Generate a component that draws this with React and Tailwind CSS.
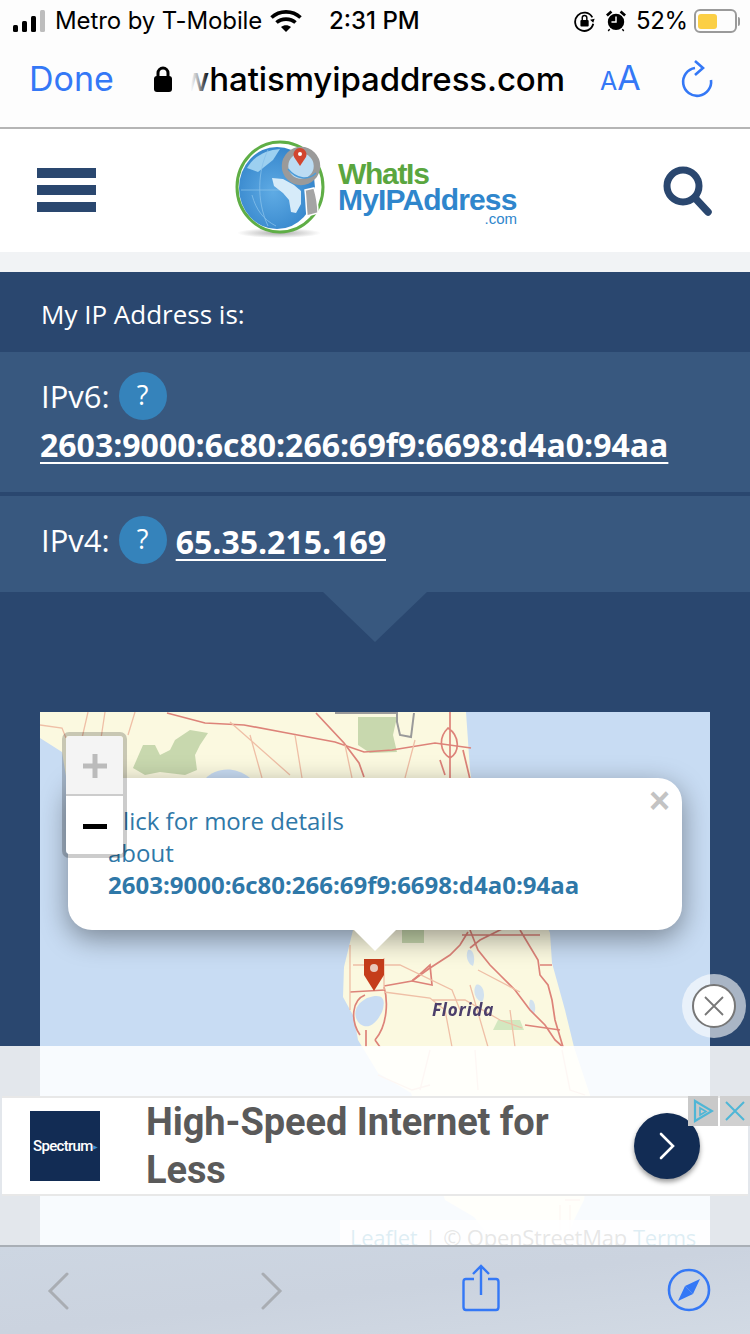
import React from "react";

const sf = "font-['Inter','Liberation_Sans',sans-serif]";
const os = "font-['Open_Sans','Noto_Sans',sans-serif]";

function StatusBar() {
  return (
    <div className={`flex h-[42px] items-center text-[24px] text-black ${sf}`}>
      <svg width="32" height="22" viewBox="0 0 32 22" className="ml-[13px]">
        <rect x="0" y="15" width="5" height="7" rx="1.5" fill="#000" />
        <rect x="9" y="11" width="5" height="11" rx="1.5" fill="#000" />
        <rect x="18" y="6" width="5" height="16" rx="1.5" fill="#000" />
        <rect x="27" y="0" width="5" height="22" rx="1.5" fill="#bdbdbd" />
      </svg>
      <span className="ml-[10px] w-[215px] whitespace-nowrap tracking-[-0.1px]">Metro by T-Mobile</span>
      <svg width="32" height="24" viewBox="0 0 32 24">
        <path d="M1.5 8.5C9.5 1 22.5 1 30.5 8.5" stroke="#000" strokeWidth="3.6" fill="none" />
        <path d="M6.5 13.5C11.5 9 20.5 9 25.5 13.5" stroke="#000" strokeWidth="3.6" fill="none" />
        <path d="M11 18C14 15.5 18 15.5 21 18L16 23Z" fill="#000" />
      </svg>
      <span className="ml-[27px] w-[100px] whitespace-nowrap font-medium">2:31 PM</span>
      <svg width="22" height="22" viewBox="0 0 24 24" className="ml-[145px]">
        <path d="M20 8A10 10 0 1 0 21 15" stroke="#000" strokeWidth="2" fill="none" />
        <path d="M22.5 9.5L17.5 10.5L21 14Z" fill="#000" />
        <rect x="7" y="11" width="9" height="7" rx="1" fill="#000" />
        <path d="M9 11V8.5a2.5 2.5 0 0 1 5 0V11" stroke="#000" strokeWidth="1.6" fill="none" />
      </svg>
      <svg width="20" height="22" viewBox="0 0 22 24" className="ml-[10px]">
        <circle cx="11" cy="13" r="9" fill="#000" />
        <path d="M11 7V13H6" stroke="#fff" strokeWidth="1.6" fill="none" />
        <path d="M1 6L6 1.5M21 6L16 1.5" stroke="#000" strokeWidth="3" />
        <path d="M4 21L2.5 23M18 21L19.5 23" stroke="#000" strokeWidth="1.6" />
      </svg>
      <span className="ml-[10px] whitespace-nowrap tracking-[-0.4px]">52%</span>
      <div className="ml-[6px] flex items-center">
        <div className="flex h-[24px] w-[43px] items-center rounded-[6px] border-2 border-[#9a9a9a] p-[2px]">
          <div className="h-[15px] w-[19px] rounded-[3px] bg-[#fbcf45]" />
        </div>
        <div className="ml-[1px] h-[9px] w-[2px] rounded-r bg-[#9a9a9a]" />
      </div>
    </div>
  );
}

function UrlBar() {
  return (
    <div className={`flex h-[87px] items-start border-b-2 border-[#b5b5b5] pt-[15px] ${sf}`}>
      <span className="ml-[29px] w-[110px] text-[34px] leading-[44px] text-[#3478f6]">Done</span>
      <svg width="18" height="26" viewBox="0 0 18 26" className="ml-[15px] mt-[9px]">
        <rect x="0" y="10" width="18" height="16" rx="3" fill="#000" />
        <path d="M4 11V7a5 5 0 0 1 10 0v4" stroke="#000" strokeWidth="3" fill="none" />
      </svg>
      <div className="relative ml-[9px] h-[44px] w-[392px]">
        <span className="absolute left-[1px] top-0 whitespace-nowrap text-[33px] font-medium leading-[44px] tracking-[-0.1px] text-black">whatismyipaddress.com</span>
        <div className="absolute left-0 top-0 h-[44px] w-[28px] bg-gradient-to-r from-[#fdfdfd] from-35% via-[#fdfdfd]/70 via-60% to-transparent" />
      </div>
      <div className="ml-[27px] mt-[3px] flex w-[38px] items-baseline text-[#3478f6]">
        <span className="text-[25px] leading-[36px]">A</span>
        <span className="text-[34px] leading-[36px]">A</span>
      </div>
      <svg width="34" height="40" viewBox="0 0 34 40" className="ml-[42px] mt-[1px]">
        <path d="M15 10A14 14 0 1 0 31 22" stroke="#3478f6" strokeWidth="2.6" fill="none" />
        <path d="M15 3L23 10L15 17" stroke="#3478f6" strokeWidth="2.6" fill="none" />
      </svg>
    </div>
  );
}

function Logo() {
  return (
    <div className="flex h-[123px] items-start">
      <svg width="94" height="100" viewBox="233 140 94 100" className="mt-[11px]">
        <defs>
          <radialGradient id="g" cx="0.45" cy="0.55" r="0.65">
            <stop offset="0" stopColor="#5fabe4" />
            <stop offset="1" stopColor="#2f80c8" />
          </radialGradient>
          <radialGradient id="s" cx="0.5" cy="0.5" r="0.5">
            <stop offset="0" stopColor="#8a8a8a" stopOpacity="0.7" />
            <stop offset="1" stopColor="#8a8a8a" stopOpacity="0" />
          </radialGradient>
        </defs>
        <ellipse cx="279" cy="233" rx="42" ry="5" fill="url(#s)" />
        <ellipse cx="280" cy="187" rx="43" ry="45" fill="#fff" stroke="#5fae46" strokeWidth="3" />
        <ellipse cx="277" cy="188" rx="38" ry="41" fill="url(#g)" />
        <path d="M247 168C254 156 266 150 280 149L273 160L258 172Z" fill="#9cd0f0" />
        <path d="M252 195C256 210 264 220 276 226M241 190H300M268 150C258 170 256 200 268 226" stroke="#86c0ea" strokeWidth="0.8" fill="none" />
        <path d="M272 178L283 179L294 185L301 191L301 204L296 213L291 212L289 200L283 193L274 186Z" fill="#d6ebf9" />
        <circle cx="301" cy="166" r="16" fill="#bcdcf3" stroke="#9a9a9a" strokeWidth="6.5" />
        <path d="M288 169C296 179 308 181 316 173" stroke="#4b9bd8" strokeWidth="1.4" fill="none" />
        <path d="M300 166L294 157A6.5 6.5 0 1 1 306 157Z" fill="#d2452f" />
        <circle cx="300" cy="154" r="2" fill="#fff" />
        <path d="M305 190L314 188C317 198 318 206 318 213L307 216C306 206 306 198 305 190Z" fill="#a4a4a4" stroke="#fff" strokeWidth="1.5" />
      </svg>
      <div className="ml-[11px] mt-[31px] flex w-[180px] flex-col font-['Liberation_Sans',sans-serif] font-bold">
        <span className="h-[27px] text-[30px] leading-[27px] tracking-[-1.3px] text-[#5aa63f]">WhatIs</span>
        <span className="h-[26px] whitespace-nowrap text-[30px] leading-[26px] tracking-[-0.85px] text-[#2f86cc]">MyIPAddress</span>
        <span className="self-end pr-[1px] text-[15px] font-normal leading-[12px] text-[#2f86cc]">.com</span>
      </div>
    </div>
  );
}

function SiteHeader() {
  return (
    <div className="flex h-[123px] bg-white">
      <div className="ml-[37px] mt-[39px] flex h-[44px] w-[59px] flex-col gap-[7px]">
        <div className="h-[10px] bg-[#2a476f]" />
        <div className="h-[10px] bg-[#2a476f]" />
        <div className="h-[10px] bg-[#2a476f]" />
      </div>
      <div className="ml-[137px]"><Logo /></div>
      <svg width="50" height="52" viewBox="0 0 50 52" className="ml-[145px] mt-[37px]">
        <circle cx="20" cy="20" r="16" stroke="#2a476f" strokeWidth="7" fill="none" />
        <path d="M32 32L45 46" stroke="#2a476f" strokeWidth="7.5" strokeLinecap="round" />
      </svg>
    </div>
  );
}

function Q() {
  return (
    <span className="mx-[9px] flex h-[48px] w-[48px] shrink-0 items-center justify-center rounded-full bg-[#3583bb] pb-[4px] text-[27px] leading-none text-white">?</span>
  );
}

function IpPanel() {
  return (
    <div className={`text-white ${os}`}>
      <div className="flex h-[80px] items-center pl-[41px] pt-[5px] text-[26px]">My IP Address is:</div>
      <div className="h-[140px] bg-[#38587f] pl-[40px] pt-[20px]">
        <div className="flex h-[48px] items-center pl-[1px] text-[31px]">IPv6:<Q /></div>
        <a className="mt-[3px] block whitespace-nowrap text-[32px] font-bold leading-[44px] underline decoration-[2px] underline-offset-[5px]">2603:9000:6c80:266:69f9:6698:d4a0:94aa</a>
      </div>
      <div className="mt-[4px] flex h-[96px] items-center bg-[#38587f] pb-[8px] pl-[41px]">
        <span className="text-[31px]">IPv4:</span><Q />
        <a className="mt-[3px] text-[32px] font-bold underline decoration-[2px] underline-offset-[5px]">65.35.215.169</a>
      </div>
      <div className="mx-auto h-0 w-0 border-x-[52px] border-t-[50px] border-x-transparent border-t-[#38587f]" />
    </div>
  );
}

const road = "#dd8379";
const thin = "#efbfa6";

function MapArt() {
  return (
    <svg width="670" height="622" viewBox="40 712 670 622" className="block blur-[0.4px]">
      <rect x="40" y="712" width="670" height="622" fill="#c8dcf3" />
      <path d="M40 712H466L470 770L476 810L484 860L535 900L550 933L552 963L565 1010L574 1047L590 1095L592 1150L584 1200L574 1220L556 1262L540 1275L505 1255L474 1217L445 1200L411 1093L378 1073L358 1040L354 1017L343 997L344 967L353 930L300 800L70 800L62 752L40 738Z" fill="#fbf9e0" />
      <path d="M133 768L143 745L155 745L160 755L170 750L175 740L190 730L208 733L200 745L195 755L197 770L185 775L160 772L145 775Z" fill="#c8d8ae" />
      <path d="M358 717H397L393 735L397 752L370 753L358 745Z" fill="#c8d8ae" />
      <path d="M206 778C214 770 232 764 250 778V790H206Z" fill="#c8dcf3" />
      <path d="M335 713H397L397 722L400 735L411 737L414 713" stroke="#9a9a9a" strokeWidth="2" fill="none" />
      <path d="M493 1030L498 1020H520L524 1030Z" fill="#d3e8c0" />
      <path d="M402 930H424V943H402Z" fill="#c8d8ae" />
      <path d="M367 998C384 992 386 1000 382 1012C376 1024 368 1030 360 1024C352 1016 354 1005 367 998Z" fill="#c8dcf3" />
      <path d="M468 950C473 948 476 958 473 966C468 964 465 956 468 950ZM476 985C482 982 487 995 482 1002C476 1000 472 992 476 985ZM530 1000C534 998 537 1008 534 1014C530 1012 528 1006 530 1000Z" fill="#c8dcf3" opacity="0.8" />
      <g stroke={road} strokeWidth="1.7" fill="none">
        <path d="M167 713L205 723L244 725L287 733L335 742L364 752L392 750L435 743L471 748" />
        <path d="M316 713L344 743L359 763L364 777" />
        <path d="M448 728C438 738 440 752 450 758C460 752 460 736 448 728ZM450 712V780" />
        <path d="M463 750L475 800M440 760L445 775" />
        <path d="M384 986L412 981L430 968L450 955L460 945L468 932" />
        <path d="M412 981L418 976L430 965L432 985L412 981" />
        <path d="M470 930L478 950L490 965L500 975L515 990L530 1010L545 1025L555 1040L563 1047" />
        <path d="M462 935H540M470 948L480 940L510 925M520 930L538 960L540 975L548 985L552 1000L555 1020L563 1047" />
        <path d="M525 1025L560 1030M540 965H552" />
        <path d="M360 1035C350 1020 352 1000 365 995M375 1040C388 1025 388 1000 384 987" />
        <path d="M366 1030V1047M375 1040L380 1047M350 992L385 990" />
      </g>
      <g stroke={thin} strokeWidth="1.3" fill="none">
        <path d="M40 725L62 728L66 738M88 712L82 738M105 712L100 745M135 712L128 735" />
        <path d="M230 722L290 775M250 735L262 778M295 735L302 778M345 745L352 778M415 740L405 778" />
        <path d="M384 992L430 998L445 1010L452 1047M432 1000L465 1000L500 1020L522 1028M478 970L520 992" />
        <path d="M353 965H400L452 990L460 1010M350 945V1010M384 958V990M470 985L488 1047M510 1010L515 1047" />
        <path d="M378 1075L412 1090L430 1085M430 1050L420 1090M475 1050L478 1090" />
        <path d="M562 1050L570 1090L585 1095M565 1200H580M570 1205V1240M560 1205V1240" />
      </g>
      <text x="432" y="1016" fill="#4b3f6b" fontSize="17" fontStyle="italic" fontWeight="700" letterSpacing="0.8" fontFamily="'Noto Sans',sans-serif">Florida</text>
      <path d="M364 959H384V975L374 991L364 975Z" fill="#c53d1b" />
      <circle cx="374" cy="968" r="4" fill="#e9c8bd" />
    </svg>
  );
}

function MapBlock() {
  return (
    <div className={`relative mx-[40px] mt-[70px] h-[622px] w-[670px] overflow-hidden ${os}`}>
      <MapArt />
      <div className="absolute right-0 top-[508px] flex h-[34px] w-[370px] items-center whitespace-nowrap bg-white/80 pl-[10px] text-[22px] tracking-[-0.25px] text-[#444]">
        <span className="text-[#0078a8]">Leaflet</span><span className="mx-[7px]">|</span><span>© OpenStreetMap</span><span className="ml-[6px] text-[#0078a8]">Terms</span>
      </div>
      <div className="absolute left-[28px] top-[66px] h-[152px] w-[614px] rounded-[24px] bg-white pl-[40px] pt-[27px] text-[24px] leading-[32px] text-[#2f78a8] shadow-[0_8px_28px_rgba(0,0,0,0.4)]">
        <div className="w-[300px]">Click for more details</div>
        <div>about</div>
        <div className="font-bold">2603:9000:6c80:266:69f9:6698:d4a0:94aa</div>
        <span className="absolute right-[12px] top-[2px] font-['Liberation_Sans',sans-serif] text-[36px] font-bold leading-[42px] text-[#c3c3c3]">×</span>
      </div>
      <div className="absolute left-[314px] top-[218px] h-0 w-0 border-x-[21px] border-t-[21px] border-x-transparent border-t-white" />
      <div className="absolute left-[22px] top-[20px] h-[126px] w-[65px] rounded-[7px] border-[4px] border-[#000]/20 bg-clip-padding">
        <div className="flex h-[60px] items-center justify-center rounded-t-[4px] border-b-2 border-[#ccc] bg-[#f4f4f4] pt-[1px]">
          <svg width="24" height="24" viewBox="0 0 24 24"><path d="M0 12H24M12 0V24" stroke="#bbb" strokeWidth="5" /></svg>
        </div>
        <div className="flex h-[58px] items-center justify-center rounded-b-[4px] bg-white pt-[3px]">
          <svg width="24" height="6" viewBox="0 0 24 6"><rect width="24" height="5" fill="#000" /></svg>
        </div>
      </div>
    </div>
  );
}

function AdOverlay() {
  return (
    <div className="absolute left-0 top-[1046px] h-[199px] w-[750px] bg-white/[0.87]">
      <div className="absolute right-[4px] top-[-72px] flex h-[64px] w-[64px] items-center justify-center rounded-full bg-[#fff]/60">
        <div className="flex h-[44px] w-[44px] items-center justify-center rounded-full border-2 border-[#777] bg-white">
          <svg width="22" height="22" viewBox="0 0 22 22"><path d="M2 2L20 20M20 2L2 20" stroke="#777" strokeWidth="1.8" /></svg>
        </div>
      </div>
      <div className="relative mx-[2px] mt-[50px] flex h-[100px] items-center border-y-2 border-[#e8e8e8] bg-white">
        <div className="ml-[28px] flex h-[70px] w-[70px] shrink-0 items-center justify-center bg-[#122c54] font-['Roboto',sans-serif] text-[15px] font-medium tracking-[-0.7px] text-white">Spectrum<span className="text-[6px] text-[#3f8fd8]">▶</span></div>
        <div className="ml-[46px] w-[440px] shrink-0 font-['Roboto',sans-serif] text-[38px] font-bold leading-[48px] tracking-[-0.08px] text-[#5a5a5a]">High-Speed Internet for Less</div>
        <div className="ml-[48px] flex h-[66px] w-[66px] shrink-0 items-center justify-center rounded-full bg-[#122c54] shadow-[0_3px_5px_rgba(0,0,0,0.4)]">
          <svg width="18" height="30" viewBox="0 0 18 30"><path d="M3 3L15 15L3 27" stroke="#fff" strokeWidth="2.6" fill="none" strokeLinecap="round" /></svg>
        </div>
      </div>
      <div className="absolute right-0 top-[50px] flex gap-[2px]">
        <div className="flex h-[30px] w-[30px] items-center justify-center bg-[#c9c9c9]">
          <svg width="22" height="24" viewBox="0 0 22 24"><path d="M3 2L20 12L3 22Z" stroke="#4fb6d6" strokeWidth="2.2" fill="none" /><path d="M8 9L14 12.5L8 16Z" stroke="#4fb6d6" strokeWidth="1.6" fill="none" /></svg>
        </div>
        <div className="flex h-[30px] w-[30px] items-center justify-center bg-[#d0d0d0]">
          <svg width="20" height="20" viewBox="0 0 20 20"><path d="M1 1L19 19M19 1L1 19" stroke="#4fb6d6" strokeWidth="2" /></svg>
        </div>
      </div>
    </div>
  );
}

function Toolbar() {
  return (
    <div className="absolute bottom-0 left-0 flex h-[89px] w-[750px] items-start border-t-2 border-[#a9afb6] bg-gradient-to-br from-[#cdd6e2] via-[#cbd3df] to-[#d2dae4]">
      <svg width="22" height="38" viewBox="0 0 22 38" className="ml-[47px] mt-[25px]"><path d="M20 2L3 19L20 36" stroke="#a9adb3" strokeWidth="3" fill="none" strokeLinecap="round" /></svg>
      <svg width="22" height="38" viewBox="0 0 22 38" className="ml-[192px] mt-[25px]"><path d="M2 2L19 19L2 36" stroke="#a9adb3" strokeWidth="3" fill="none" strokeLinecap="round" /></svg>
      <svg width="38" height="48" viewBox="0 0 38 48" className="ml-[179px] mt-[17px]">
        <path d="M12 15H4Q1.5 15 1.5 18V43Q1.5 46 4 46H34Q36.5 46 36.5 43V18Q36.5 15 34 15H26" stroke="#3478f6" strokeWidth="2.4" fill="none" />
        <path d="M19 2V31M11 10L19 2L27 10" stroke="#3478f6" strokeWidth="2.4" fill="none" />
      </svg>
      <svg width="44" height="44" viewBox="0 0 44 44" className="ml-[167px] mt-[21px]">
        <circle cx="22" cy="22" r="20" stroke="#3478f6" strokeWidth="2.6" fill="none" />
        <path d="M33 11L26 26L18 18Z" fill="#3478f6" />
        <path d="M11 33L18 18L26 26Z" fill="#3478f6" />
      </svg>
    </div>
  );
}

export default function App() {
  return (
    <div className="relative h-[1334px] w-[750px] overflow-hidden bg-[#2a476f]">
      <div className="bg-[#fdfdfd]">
        <StatusBar />
        <UrlBar />
      </div>
      <SiteHeader />
      <div className="h-[20px] bg-[#f1f3f5]" />
      <IpPanel />
      <MapBlock />
      <AdOverlay />
      <Toolbar />
    </div>
  );
}
